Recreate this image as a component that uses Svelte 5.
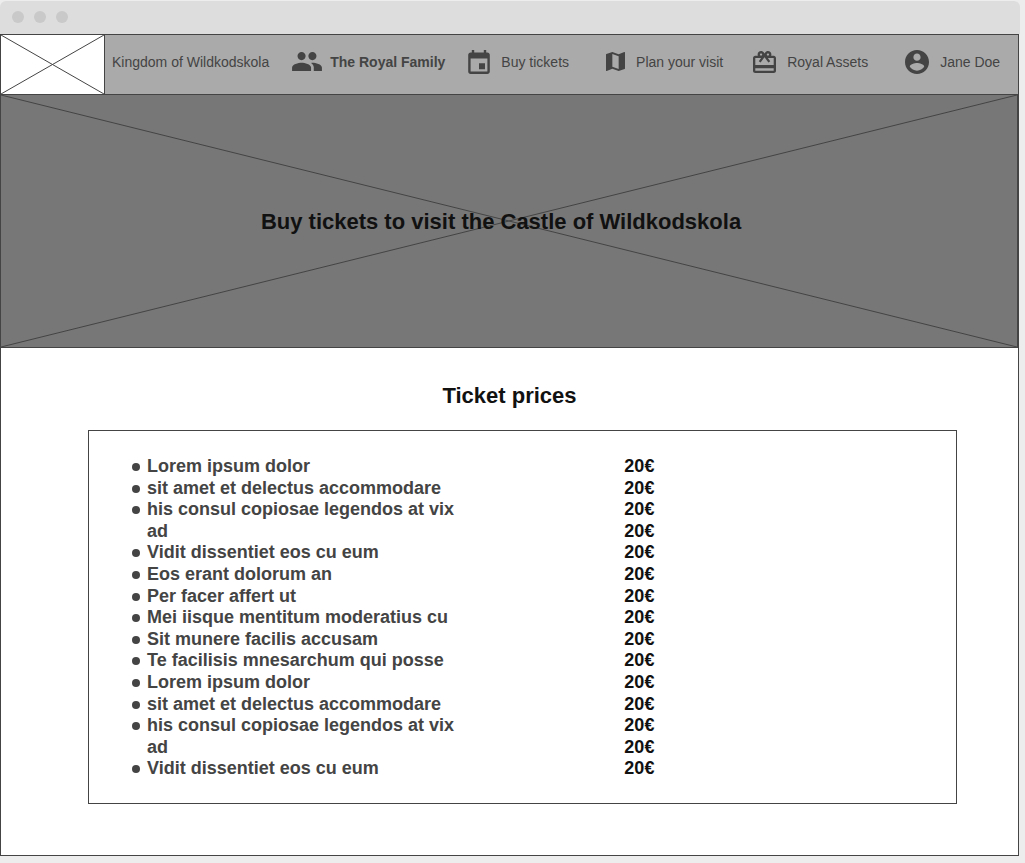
<script>
  const tickets = [
    'Lorem ipsum dolor',
    'sit amet et delectus accommodare',
    'his consul copiosae legendos at vix ad',
    'Vidit dissentiet eos cu eum',
    'Eos erant dolorum an',
    'Per facer affert ut',
    'Mei iisque mentitum moderatius cu',
    'Sit munere facilis accusam',
    'Te facilisis mnesarchum qui posse',
    'Lorem ipsum dolor',
    'sit amet et delectus accommodare',
    'his consul copiosae legendos at vix ad',
    'Vidit dissentiet eos cu eum'
  ];
  const prices = Array(15).fill('20€');
</script>

{#snippet placeholder()}
  <svg class="cross" viewBox="0 0 100 100" preserveAspectRatio="none" aria-hidden="true">
    <path d="M0 0L100 100M100 0L0 100" vector-effect="non-scaling-stroke" />
  </svg>
{/snippet}

<div class="window">
  <div class="titlebar"><i></i><i></i><i></i></div>
  <div class="page">
    <header>
      <a class="logo" href="#home" aria-label="Home">{@render placeholder()}</a>
      <nav>
        <a href="#kingdom">Kingdom of Wildkodskola</a>
        <a href="#family" class="current">
          <svg viewBox="1 5 22 14" width="30" height="19"><path d="M16 11c1.66 0 2.99-1.34 2.99-3S17.66 5 16 5s-3 1.34-3 3 1.34 3 3 3zm-8 0c1.66 0 2.99-1.34 2.99-3S9.66 5 8 5 5 6.34 5 8s1.34 3 3 3zm0 2c-2.33 0-7 1.17-7 3.5V19h14v-2.500C15 14.170 10.330 13 8 13zm8 0c-.29 0-.62.02-.97.05 1.16.84 1.97 1.970 1.970 3.450V19h6v-2.500c0-2.330-4.670-3.500-7-3.500z" /></svg>
          The Royal Family
        </a>
        <a href="#tickets" class="roomy">
          <svg viewBox="3 1 18 20" width="22" height="24"><path d="M17 12h-5v5h5v-5zM16 1v2H8V1H6v2H5c-1.110 0-1.990.9-1.990 2L3 19c0 1.100.89 2 2 2h14c1.100 0 2-.9 2-2V5c0-1.100-.9-2-2-2h-1V1h-2zm3 18H5V8h14v11z" /></svg>
          Buy tickets
        </a>
        <a href="#visit" class="far">
          <svg viewBox="3 3 18 18" width="19" height="19"><path d="M20.500 3l-.16.03L15 5.100 9 3 3.360 4.900c-.21.07-.36.25-.36.48V20.500c0 .28.22.5.5.5l.16-.03L9 18.900l6 2.100 5.640-1.900c.21-.07.36-.25.36-.48V3.500c0-.28-.22-.5-.5-.5zM15 19l-6-2.110V5l6 2.110V19z" /></svg>
          Plan your visit
        </a>
        <a href="#assets" class="mid">
          <svg viewBox="2 2 20 19" width="23" height="22"><path d="M20 6h-2.180c.11-.31.18-.65.18-1 0-1.660-1.340-3-3-3-1.050 0-1.960.54-2.500 1.350l-.5.670-.5-.68C10.960 2.540 10.050 2 9 2 7.340 2 6 3.340 6 5c0 .35.07.69.18 1H4c-1.110 0-1.990.89-1.990 2L2 19c0 1.110.89 2 2 2h16c1.110 0 2-.89 2-2V8c0-1.110-.89-2-2-2zm-5-2c.55 0 1 .45 1 1s-.45 1-1 1-1-.45-1-1 .45-1 1-1zM9 4c.55 0 1 .45 1 1s-.45 1-1 1-1-.45-1-1 .45-1 1-1zm11 15H4v-2h16v2zm0-5H4V8h5.080L7 10.830 8.620 12 11 8.760l1-1.360 1 1.360L15.380 12 17 10.830 14.920 8H20v6z" /></svg>
          Royal Assets
        </a>
        <a href="#account" class="far">
          <svg viewBox="2 2 20 20" width="24" height="24"><path d="M12 2C6.480 2 2 6.480 2 12s4.480 10 10 10 10-4.480 10-10S17.520 2 12 2zm0 3c1.660 0 3 1.340 3 3s-1.340 3-3 3-3-1.340-3-3 1.340-3 3-3zm0 14.200c-2.500 0-4.710-1.280-6-3.220.03-1.990 4-3.080 6-3.080 1.990 0 5.970 1.090 6 3.080-1.290 1.940-3.500 3.220-6 3.220z" /></svg>
          Jane Doe
        </a>
      </nav>
    </header>

    <section class="hero">
      {@render placeholder()}
      <h1>Buy tickets to visit the Castle of Wildkodskola</h1>
    </section>

    <main>
      <h2>Ticket prices</h2>
      <div class="card">
        <ul class="names">
          {#each tickets as ticket}<li>{ticket}</li>{/each}
        </ul>
        <ul class="prices">
          {#each prices as price}<li>{price}</li>{/each}
        </ul>
      </div>
    </main>
  </div>
</div>

<style>
  :global(body) {
    background: #ededed;
    font-family: "Liberation Sans", Arial, sans-serif;
    color: #444;
  }
  * { box-sizing: border-box; }
  .window { padding: 1px 5px 7px 0; }
  .titlebar {
    display: flex;
    align-items: center;
    gap: 10px;
    height: 33px;
    padding: 0 12px 2px;
    background: #ddd;
    border-radius: 6px 6px 0 0;
  }
  .titlebar i {
    width: 12px;
    height: 12px;
    border-radius: 50%;
    background: #c9c9c9;
  }
  .page {
    margin-right: 1px;
    border: 1px solid #444;
    background: #fff;
  }
  header {
    display: flex;
    height: 60px;
    background: #aaa;
    border-bottom: 1px solid #444;
  }
  .logo {
    position: relative;
    flex: 0 0 104px;
    background: #fff;
    border-right: 1px solid #444;
  }
  .cross {
    position: absolute;
    inset: 0;
    width: 100%;
    height: 100%;
    fill: none;
    stroke: #444;
    stroke-width: 1;
  }
  nav {
    flex: 1;
    display: flex;
    align-items: center;
    gap: 23px;
    padding: 0 16px 6px 7px;
    font-size: 14px;
    line-height: 20px;
    white-space: nowrap;
  }
  nav a {
    display: flex;
    align-items: center;
    gap: 8px;
    color: #444;
    text-decoration: none;
  }
  nav svg { fill: #444; flex: none; }
  .current { font-weight: bold; }
  .roomy, .mid, .far { gap: 11px; }
  .mid { margin-left: 7px; }
  .far { margin-left: 14px; }
  .hero {
    position: relative;
    display: grid;
    place-items: center;
    height: 253px;
    padding: 2px 16px 0 0;
    background: #777;
    border-right: 1px solid #444;
    border-bottom: 1px solid #444;
  }
  h1, h2 {
    position: relative;
    margin: 0;
    font-size: 22px;
    line-height: 26px;
    color: #111;
    text-align: center;
  }
  main { padding: 35px 61px 51px 87px; }
  h2 { padding-right: 26px; }
  .card {
    display: grid;
    grid-template-columns: 17fr 10fr;
    margin-top: 21px;
    padding: 25px 42px 23px 43px;
    border: 1px solid #444;
    font-size: 18px;
    font-weight: bold;
    line-height: 1.2;
  }
  ul { margin: 0; padding: 0; list-style: none; }
  .names { max-width: 345px; }
  .names li { display: flex; gap: 7px; }
  .names li::before {
    content: "";
    flex: none;
    width: 8px;
    height: 8px;
    margin-top: 7px;
    border-radius: 50%;
    background: #444;
  }
  .prices { color: #111; }
</style>
